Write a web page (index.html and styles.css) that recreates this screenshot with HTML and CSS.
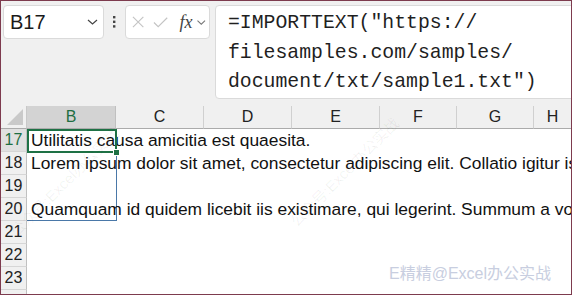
FILE: index.html
```html
<!DOCTYPE html>
<html lang="en">
    <head>
        <meta charset="UTF-8">
        <title>IMPORTTEXT</title>
        <link rel="stylesheet" href="styles.css">
    </head>
    <body>
        <div class="window">
            <div class="toolbar">
                <div class="namebox">
                    <span class="ref">B17</span>
                    <svg class="chev" width="11" height="6" viewBox="0 0 11 6"><path d="M1 1 L5.5 5 L10 1" fill="none" stroke="#444" stroke-width="1.2"/></svg>
                </div>
                <div class="dots">
                    <svg width="3" height="12" viewBox="0 0 3 12"><rect x="0" y="0" width="2.4" height="2.4" fill="#444"/><rect x="0" y="4.6" width="2.4" height="2.4" fill="#444"/><rect x="0" y="9.2" width="2.4" height="2.4" fill="#444"/></svg>
                </div>
                <div class="fxbox">
                    <svg class="ico" width="13" height="12" viewBox="0 0 13 12"><path d="M1 0.5 L12 11.5 M12 0.5 L1 11.5" stroke="#c4c4c4" stroke-width="1.2" fill="none"/></svg>
                    <svg class="ico" width="16" height="11" viewBox="0 0 16 11"><path d="M1 5.5 L5.5 10 L15 0.5" stroke="#c4c4c4" stroke-width="1.2" fill="none"/></svg>
                    <span class="fx">fx</span>
                    <svg class="ico" width="9" height="5" viewBox="0 0 9 5"><path d="M0.5 0.5 L4.5 4.3 L8.5 0.5" fill="none" stroke="#777" stroke-width="1.1"/></svg>
                </div>
                <div class="formula">=IMPORTTEXT("https://<br>filesamples.com/samples/<br>document/txt/sample1.txt")</div>
            </div>
            <div class="sheet">
                <div class="corner"><svg width="16" height="16" viewBox="0 0 16 16"><path d="M16 0 L16 16 L0 16 Z" fill="#c9c9c9"/></svg></div>
                <div class="colhead active">B</div>
                <div class="colhead">C</div>
                <div class="colhead">D</div>
                <div class="colhead">E</div>
                <div class="colhead">F</div>
                <div class="colhead">G</div>
                <div class="colhead last">H</div>

                <div class="rowhead active">17</div>
                <div class="cell current">Utilitatis causa amicitia est quaesita.</div>
                <div class="rowhead">18</div>
                <div class="cell spill">Lorem ipsum dolor sit amet, consectetur adipiscing elit. Collatio igitur is</div>
                <div class="rowhead">19</div>
                <div class="cell spill"></div>
                <div class="rowhead">20</div>
                <div class="cell spill end">Quamquam id quidem licebit iis existimare, qui legerint. Summum a vo</div>
                <div class="rowhead">21</div>
                <div class="cell"></div>
                <div class="rowhead">22</div>
                <div class="cell"></div>
                <div class="rowhead">23</div>
                <div class="cell"></div>
                <div class="rowhead"></div>
                <div class="cell"></div>
            </div>
            <div class="mark mark-a">公众号:Excel办公实战</div>
            <div class="mark mark-b">公众号:Excel办公实战</div>
            <div class="sign">E精精@Excel办公实战</div>
        </div>
    </body>
</html>
```

FILE: styles.css
```css
body {
    margin: 0;
    background-color: #fff;
    font-family: "Liberation Sans", Arial, sans-serif;
}
.window {
    position: relative;
    width: 572px;
    height: 295px;
    box-sizing: border-box;
    border: 1px solid #7d3b4e;
    overflow: hidden;
    background-color: #fff;
}
.toolbar {
    display: flex;
    align-items: flex-start;
    height: 105px;
    box-sizing: border-box;
    padding: 4px 0 0 2px;
    background-color: #f0f0f0;
}
.namebox {
    flex: none;
    display: flex;
    align-items: center;
    justify-content: space-between;
    width: 101px;
    height: 34px;
    box-sizing: border-box;
    padding: 0 5px 0 6px;
    background-color: #fff;
    border: 1px solid #dadada;
    border-radius: 4px;
}
.ref {
    font-size: 20px;
    color: #1a1a1a;
}
.dots {
    flex: none;
    width: 21px;
    height: 34px;
    display: flex;
    align-items: center;
    justify-content: center;
}
.fxbox {
    flex: none;
    display: flex;
    align-items: center;
    width: 85px;
    height: 34px;
    box-sizing: border-box;
    padding: 0 3px 0 6px;
    gap: 9px;
    background-color: #fff;
    border: 1px solid #dadada;
    border-radius: 4px;
}
.fx {
    font-family: "Liberation Serif", "Times New Roman", serif;
    font-style: italic;
    font-size: 18px;
    color: #444;
    margin-left: 2px;
    margin-right: -4px;
}
.formula {
    flex: none;
    width: 420px;
    height: 94px;
    margin-left: 5px;
    box-sizing: border-box;
    padding: 3px 12px;
    background-color: #fff;
    border: 1px solid #dadada;
    border-radius: 4px;
    font-family: "Liberation Mono", "DejaVu Sans Mono", monospace;
    font-size: 19.8px;
    line-height: 29.5px;
    color: #1f1f1f;
    white-space: nowrap;
}
.sheet {
    display: grid;
    grid-template-columns: 26px 89px 88px 88px 88px 77px 77px 1fr;
    grid-template-rows: 23px;
    grid-auto-rows: 23px;
}
.corner {
    display: flex;
    align-items: flex-end;
    justify-content: flex-end;
    padding: 0 3px 3px 0;
    background-color: #f0f0f0;
    border-right: 1px solid #c8c8c8;
    border-bottom: 1px solid #ababab;
}
.colhead {
    display: flex;
    align-items: center;
    justify-content: center;
    background-color: #f0f0f0;
    border-right: 1px solid #d0d0d0;
    border-bottom: 1px solid #ababab;
    font-size: 16px;
    color: #222;
}
.colhead.active {
    background-color: #d3d3d3;
    color: #1e6e42;
    border-right-color: #c0c0c0;
}
.colhead.last {
    border-right: none;
}
.rowhead {
    grid-column: 1;
    display: flex;
    align-items: center;
    justify-content: center;
    background-color: #f0f0f0;
    border-right: 1px solid #c0c0c0;
    border-bottom: 1px solid #d6d6d6;
    font-size: 16px;
    color: #222;
}
.rowhead.active {
    background-color: #e0e0e0;
    color: #1e6e42;
}
.cell {
    grid-column: 2;
    display: flex;
    align-items: center;
    padding-left: 4px;
    white-space: nowrap;
    font-size: 17.4px;
    color: #111;
}
.cell.current {
    position: relative;
}
.cell.current::after {
    content: '';
    position: absolute;
    left: 0;
    top: 0;
    right: -1px;
    bottom: -1px;
    border: 2px solid #1e7145;
}
.cell.current::before {
    content: '';
    position: absolute;
    right: -3px;
    bottom: -3px;
    width: 5px;
    height: 5px;
    background-color: #1e7145;
    outline: 1px solid #fff;
    z-index: 1;
}
.cell.spill {
    border-right: 1px solid #4a78a8;
    margin-right: -1px;
}
.cell.spill.end {
    border-bottom: 1px solid #4a78a8;
}
.mark {
    position: absolute;
    transform: rotate(-45deg);
    font-family: "Liberation Sans", "Noto Sans CJK SC", sans-serif;
    font-size: 15px;
    color: rgba(0, 0, 0, 0.06);
    white-space: nowrap;
    pointer-events: none;
}
.mark-a {
    left: -10px;
    top: 170px;
}
.mark-b {
    left: 270px;
    top: 160px;
}
.sign {
    position: absolute;
    left: 388px;
    top: 259px;
    font-family: "Liberation Sans", "Noto Sans CJK SC", sans-serif;
    font-size: 16px;
    color: #c8cee0;
    white-space: nowrap;
}
```
